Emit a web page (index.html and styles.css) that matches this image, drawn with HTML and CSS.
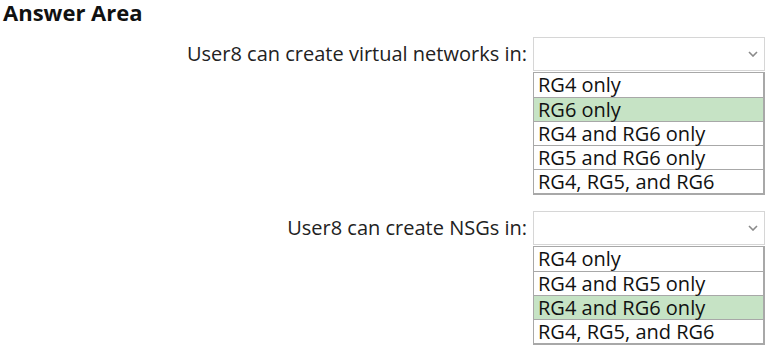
FILE: index.html
```html
<!DOCTYPE html>
<html>
<head>
<meta charset="utf-8">
<link rel="stylesheet" href="styles.css">
</head>
<body>
<div class="page">
  <h1 class="title">Answer Area</h1>
  <div class="question q1">
    <div class="label">User8 can create virtual networks in:</div>
    <div class="dropdown">
      <div class="select"><svg class="chev" width="10" height="6" viewBox="0 0 10 6"><path d="M1 1 L5 5 L9 1" fill="none" stroke="#8a8a8a" stroke-width="1.6"/></svg></div>
      <div class="options">
        <div class="option">RG4 only</div>
        <div class="option selected">RG6 only</div>
        <div class="option">RG4 and RG6 only</div>
        <div class="option">RG5 and RG6 only</div>
        <div class="option">RG4, RG5, and RG6</div>
      </div>
    </div>
  </div>
  <div class="question q2">
    <div class="label">User8 can create NSGs in:</div>
    <div class="dropdown">
      <div class="select"><svg class="chev" width="10" height="6" viewBox="0 0 10 6"><path d="M1 1 L5 5 L9 1" fill="none" stroke="#8a8a8a" stroke-width="1.6"/></svg></div>
      <div class="options">
        <div class="option">RG4 only</div>
        <div class="option">RG4 and RG5 only</div>
        <div class="option selected">RG4 and RG6 only</div>
        <div class="option">RG4, RG5, and RG6</div>
      </div>
    </div>
  </div>
</div>
</body>
</html>
```
FILE: styles.css
```css
* { box-sizing: border-box; }
body {
  margin: 0;
  background: #ffffff;
  font-family: "Open Sans", "Noto Sans", sans-serif;
  color: #1a1a1a;
}
.page {
  padding: 0 0 0 3px;
}
.title {
  margin: 0;
  font-size: 22px;
  font-weight: 700;
  line-height: 25px;
  color: #111;
}
.question {
  display: grid;
  grid-template-columns: 530px 232px;
  column-gap: 0;
  align-items: start;
}
.q1 { margin-top: 12px; }
.q2 { margin-top: 16px; }
.label {
  text-align: right;
  padding-right: 6px;
  font-size: 20px;
  line-height: 34px;
  color: #222;
}
.select {
  height: 34px;
  border: 1px solid #d6d6d6;
  display: flex;
  align-items: center;
  justify-content: flex-end;
  padding-right: 6px;
}
.options {
  margin-top: 1px;
  border: 1px solid #a8a8a8;
  border-bottom-width: 2px;
  border-right-width: 2px;
}
.option {
  height: 24px;
  line-height: 23px;
  font-size: 20px;
  padding-left: 4px;
  border-top: 1px solid #a8a8a8;
  color: #111;
  white-space: nowrap;
}
.option:first-child { border-top: none; }
.option.selected { background: #c6e3c5; }
```
